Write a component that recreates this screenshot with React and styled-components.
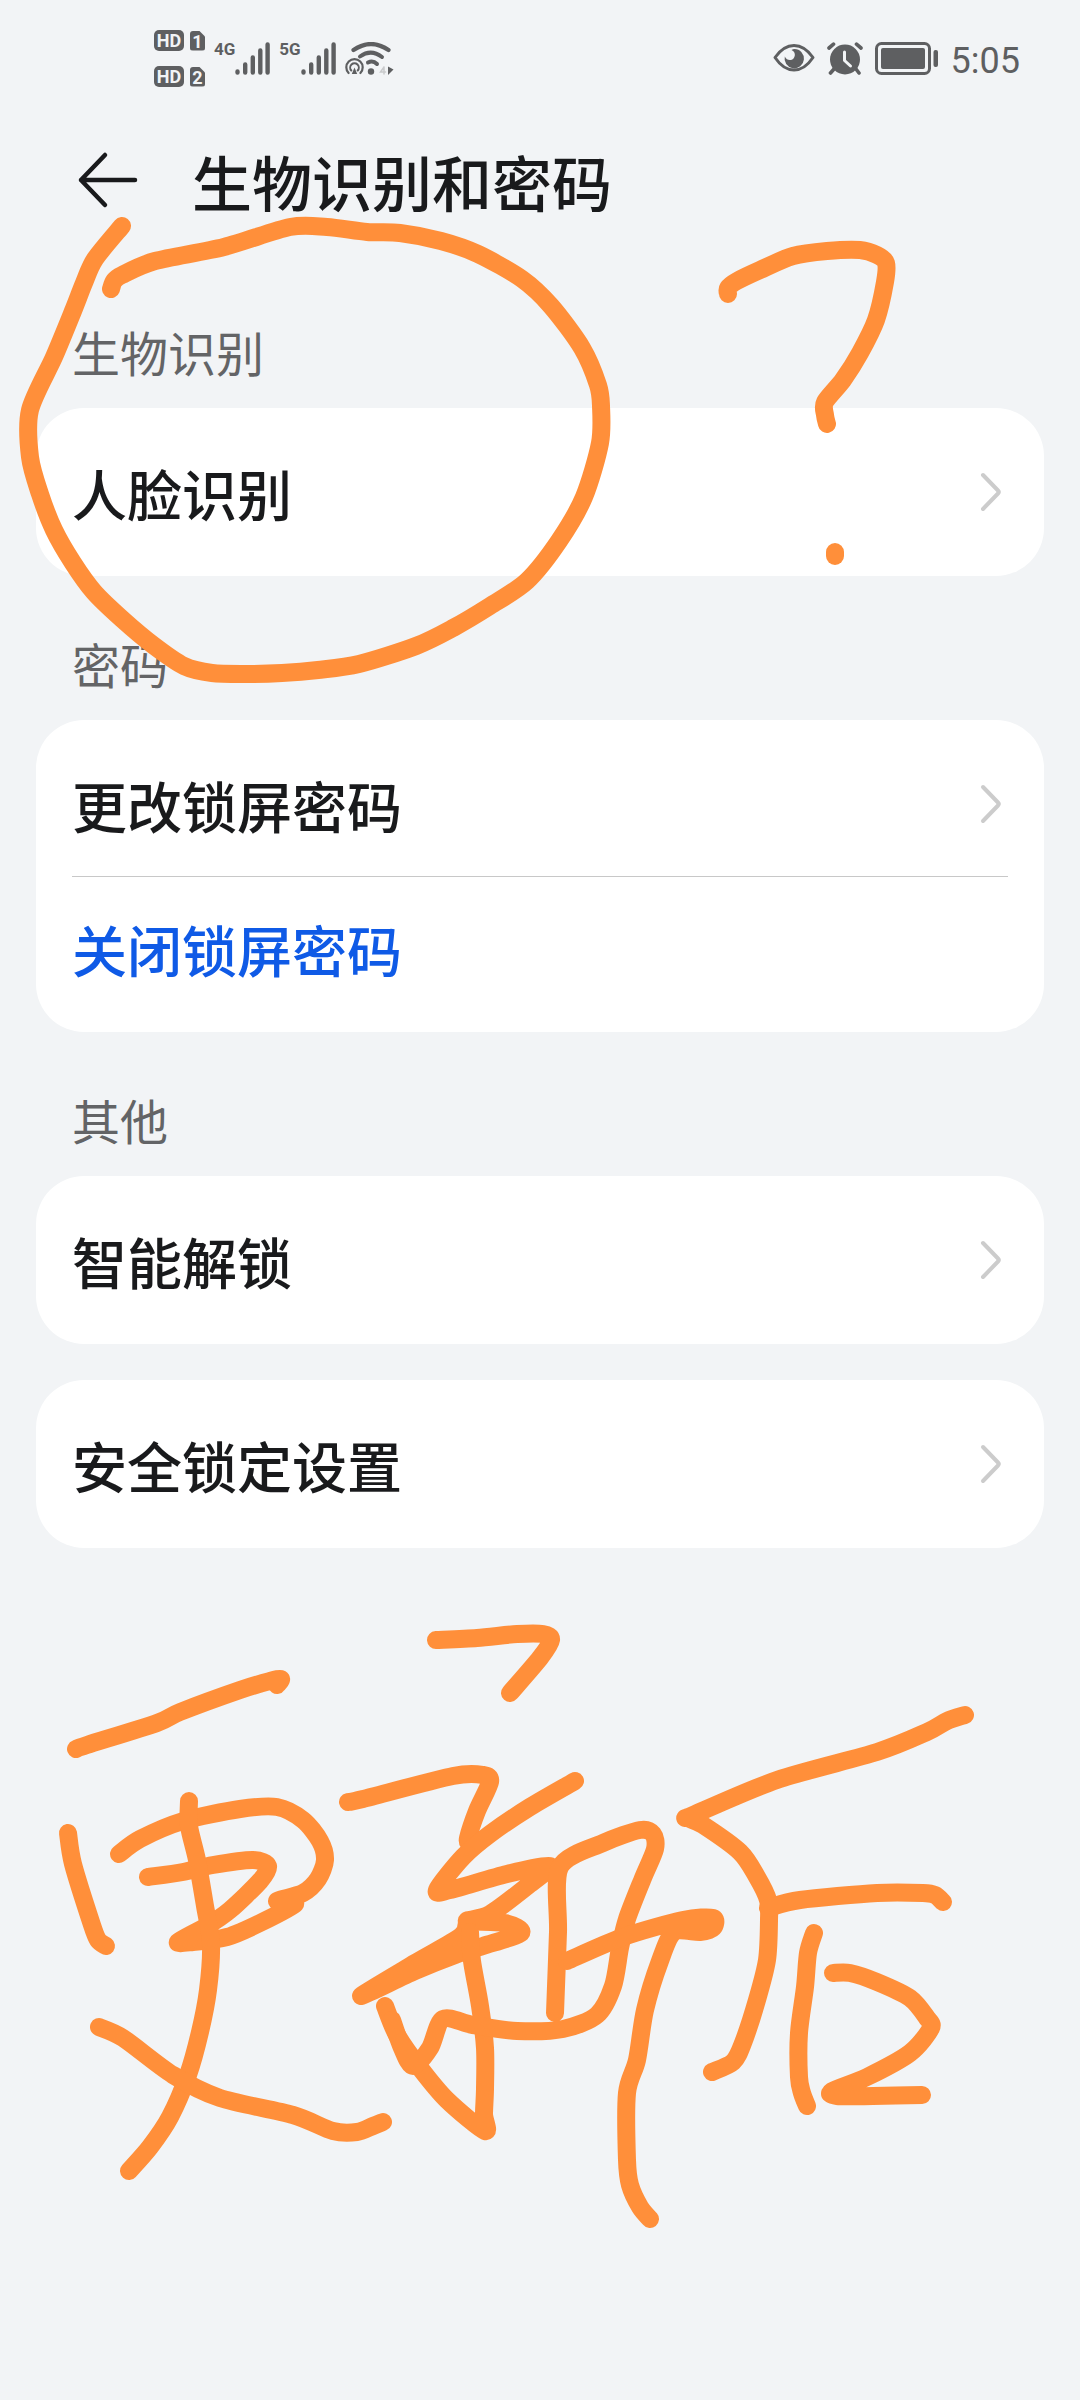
import React from 'react';
import styled, { createGlobalStyle, css } from 'styled-components';

const GlobalStyle = createGlobalStyle`
  body {
    margin: 0;
    background-color: #f2f4f6;
    font-family: Roboto, 'Noto Sans CJK SC', sans-serif;
    color: #191a1c;
  }
`;

// Whole screen
const Screen = styled.div`
  position: relative;
  min-height: 100vh;
  background-color: #f2f4f6;
`;

// Status bar at the very top
const StatusBar = styled.div`
  display: flex;
  align-items: center;
  justify-content: space-between;
  box-sizing: border-box;
  height: 96px;
  padding: 20px 60px 0 154px;
  color: #5e5f61;
`;

const StatusGroup = styled.div`
  display: flex;
  align-items: center;
  gap: ${({ $gap }) => $gap}px;
`;

const SimList = styled.div`
  display: flex;
  flex-direction: column;
  gap: 15px;
`;

const SimLine = styled.div`
  display: flex;
  align-items: flex-end;
  gap: 6px;
`;

const badge = css`
  background-color: #5e5f61;
  color: #f2f4f6;
  font-weight: 700;
  line-height: 21px;
  text-align: center;
`;

const HdBadge = styled.span`
  ${badge}
  width: 30px;
  height: 21px;
  border-radius: 5px;
  font-size: 18px;
`;

const SimBadge = styled.span`
  ${badge}
  width: 15px;
  height: 20px;
  border-radius: 3px;
  font-size: 18px;
  clip-path: polygon(0 0, 60% 0, 100% 30%, 100% 100%, 0 100%);
`;

const Signal = styled.div`
  display: flex;
  align-items: flex-start;
`;

const NetworkType = styled.span`
  font-size: 17px;
  font-weight: 700;
  line-height: 14px;
`;

const Clock = styled.span`
  padding-top: 6px;
  font-size: 36px;
  line-height: 40px;
`;

// Title bar with the back arrow
const Header = styled.header`
  display: flex;
  align-items: center;
  gap: 48px;
  height: 168px;
  padding: 0 72px;
`;

const BackButton = styled.button`
  display: flex;
  padding: 0;
  border: none;
  background: none;
  color: inherit;
  cursor: pointer;
`;

const Title = styled.h1`
  margin: 0;
  font-size: 60px;
  font-weight: 500;
`;

// Settings list
const Content = styled.main`
  padding: 0 36px;
`;

const SectionTitle = styled.h2`
  display: flex;
  align-items: flex-end;
  box-sizing: border-box;
  height: 144px;
  margin: 0;
  padding: 0 36px 22px;
  font-size: 48px;
  font-weight: 400;
  color: #636466;
`;

const Card = styled.div`
  padding: 12px 36px;
  border-radius: 48px;
  background-color: #ffffff;

  & + & {
    margin-top: 36px;
  }
`;

const Row = styled.button`
  display: flex;
  align-items: center;
  justify-content: space-between;
  width: 100%;
  height: 144px;
  padding: 0;
  border: none;
  background: none;
  font-family: inherit;
  font-size: 55px;
  font-weight: 500;
  text-align: left;
  color: ${({ $link }) => ($link ? '#0f5ae6' : '#191a1c')};
  cursor: pointer;

  & + & {
    box-shadow: inset 0 1px 0 #c8c8c8;
  }
`;

// Pen strokes lie over everything else
const Ink = styled.svg`
  position: absolute;
  top: 0;
  left: 0;
  width: 100%;
  height: auto;
  pointer-events: none;
  fill: none;
  stroke: #ff8f3a;
  stroke-width: 18px;
  stroke-linecap: round;
  stroke-linejoin: round;
`;

const SignalIcon = () => (
  <svg width="35" height="33" viewBox="0 0 35 33" stroke="currentColor" strokeWidth="4.4" strokeLinecap="round">
    <path d="M2.5 29.5v1M10.2 22.5v8M17.8 15.5v15M25.3 8.5v22M32.6 2.5v28" />
  </svg>
);

const WifiIcon = () => (
  <svg width="50" height="33" viewBox="0 0 50 33" fill="none" stroke="currentColor" strokeLinecap="round">
    <path d="M8.5 8Q26-4 43.500 8" strokeWidth="4.2" />
    <path d="M15 14.5Q26 6.500 37 15" strokeWidth="4" />
    <path d="M23 20.500Q28 18 32 22" strokeWidth="4" />
    <circle cx="26" cy="29.5" r="3.2" fill="currentColor" stroke="none" />
    <path d="M3.6 31A8.200 8.200 0 1 1 15.400 31" strokeWidth="2.2" />
    <path d="M6.3 28.500A4.300 4.300 0 1 1 12.700 28.500" strokeWidth="2" />
    <path d="M9.5 25.500L6.800 32h5.400z" fill="currentColor" stroke="none" />
    <path d="M39 25l-3.500 5h5M39 25v7" stroke="#c9cacc" strokeWidth="1.5" />
    <path d="M43 24.500v8.500l5.500-5.500z" fill="currentColor" stroke="none" />
  </svg>
);

const EyeIcon = () => (
  <svg width="42" height="30" viewBox="0 0 42 30">
    <path d="M2 14.5C8 6 14 2.500 21 2.500S34 6 40 14.500C34 23.500 28 27 21 27S8 23.500 2 14.500z" fill="none" stroke="currentColor" strokeWidth="3" strokeLinejoin="round" />
    <path d="M21.5 6A9.700 9.700 0 1 1 11.800 13.500C13.500 17.500 18 18 20.500 15.500C23 12.500 22 8.500 18.500 7C19.500 6.200 20.500 6 21.500 6z" fill="currentColor" />
  </svg>
);

const AlarmIcon = () => (
  <svg width="36" height="33" viewBox="0 0 36 33" strokeLinecap="round" strokeLinejoin="round">
    <path d="M2 6L6.500 2.200M29.500 2.200L34 6M7 27l-3.500 4M29 27l3 4" stroke="currentColor" strokeWidth="3.6" fill="none" />
    <circle cx="18" cy="17.5" r="15" fill="currentColor" />
    <path d="M17.5 10v8.500l6 5.500" stroke="#f2f4f6" strokeWidth="3" fill="none" />
  </svg>
);

const BatteryIcon = () => (
  <svg width="64" height="33" viewBox="0 0 64 33">
    <rect x="1.5" y="1.5" width="53" height="30" rx="5" fill="none" stroke="currentColor" strokeWidth="3" />
    <rect x="6" y="6" width="44" height="21" rx="2" fill="currentColor" />
    <rect x="58.5" y="8" width="4.5" height="17" rx="2" fill="currentColor" />
  </svg>
);

const BackIcon = () => (
  <svg width="72" height="60" viewBox="0 0 72 60" fill="none" stroke="currentColor" strokeWidth="4.5" strokeLinecap="round" strokeLinejoin="round">
    <path d="M63 30H9M33 5L9 30L33 55" />
  </svg>
);

const ChevronIcon = () => (
  <svg width="36" height="48" viewBox="0 0 36 48" fill="none" stroke="#cccccc" strokeWidth="4" strokeLinecap="round" strokeLinejoin="round">
    <path d="M11 7L26 22.500Q27.500 24 26 25.500L11 41" />
  </svg>
);

// Handwriting, one list of pen positions per stroke
const strokes = [
  // circle
  '122,226 95,259 84,283 73,311 54,357 30,410 30,457 40,494 54,530 73,563 94,592 122,619 153,645 184,666 212,673 245,674 282,673 318,670 359,664 416,646 453,628 490,606 527,581 559,541 584,497 600,443 601,406 598,385 582,348 551,306 522,279 478,254 441,241 400,233 367,232 327,227 290,227 224,247 155,261 122,275 114,281 111,289',
  // question mark
  '728,294 728,288 737,281 760,270 793,256 827,251 860,250 877,255 886,263 885,282 876,320 860,353 843,380 825,402 825,415 827,424',
  '835,552 835,556',
  // first character
  '76,1749 87,1745 157,1723 180,1712 240,1690 270,1681 281,1679 277,1685',
  '68,1833 73,1864 92,1925 98,1940 106,1946',
  '119,1854 140,1839 183,1821 240,1809 277,1807 303,1820 320,1841 325,1860 318,1879 303,1893 277,1901 295,1904 260,1923 227,1937 193,1942 178,1942 207,1926 230,1910 260,1881 268,1866 253,1860 213,1865 183,1872 148,1877',
  '189,1801 189,1826 197,1860 205,1906 211,1944 208,1990 200,2032 188,2075 170,2117 150,2147 129,2171',
  '99,2027 123,2038 173,2075 220,2098 293,2115 333,2131 357,2132 373,2126 383,2122',
  // second character
  '436,1640 477,1638 517,1634 543,1634 551,1640 540,1658 510,1693',
  '348,1802 363,1799 453,1776 483,1775 490,1782 477,1811 468,1838 469,1844',
  '575,1781 530,1807 490,1834 463,1857 437,1890 450,1890 507,1874 550,1866 530,1884 490,1914 467,1921 505,1923 521,1933 483,1946 455,1955 415,1971 361,1996 415,1963 461,1936 467,1921',
  '470,1932 472,1961 480,2006 485,2048 485,2089 484,2114 485,2131 447,2100 420,2068 397,2035 385,2006',
  '392,2020 402,2048 413,2066 430,2048 443,2019 473,2025 517,2031 563,2029 597,2015 613,1986 620,1948 627,1919 643,1878 655,1849 653,1834 640,1830 603,1843 560,1867 558,1932 555,2013',
  '567,1961 623,1937 683,1920 713,1918 713,1928 700,1932 674,1932 660,1961 645,2010 637,2060 627,2093 627,2160 630,2185 640,2207 650,2219',
  // third character
  '965,1715 947,1721 927,1732 877,1752 777,1780 693,1815 688,1818 703,1825 740,1852 757,1877 768,1900 769,1920 767,1960 757,2000 743,2043 733,2062 712,2072',
  '768,1908 800,1900 877,1893 923,1893 935,1895 943,1902',
  '814,1933 808,1953 805,1987 799,2033 799,2077 802,2093 807,2106',
  '833,1973 850,1973 877,1982 910,1998 927,2018 931,2028 910,2053 867,2077 832,2091 837,2096 873,2096 922,2095',
];

// Runs a smooth curve through the pen positions
const toPath = (stroke) => {
  const points = stroke.split(' ').map((pair) => pair.split(',').map(Number));
  let d = `M${points[0]}`;
  for (let i = 0; i < points.length - 1; i++) {
    const before = points[i - 1] || points[i];
    const [from, to] = [points[i], points[i + 1]];
    const after = points[i + 2] || to;
    const c1 = from.map((v, k) => v + (to[k] - before[k]) / 7);
    const c2 = to.map((v, k) => v - (after[k] - from[k]) / 7);
    d += `C${c1} ${c2} ${to}`;
  }
  return d;
};

const App = () => {
  return (
    <Screen>
      <GlobalStyle />

      {/* Status bar */}
      <StatusBar>
        <StatusGroup $gap={9}>
          <SimList>
            <SimLine>
              <HdBadge>HD</HdBadge>
              <SimBadge>1</SimBadge>
            </SimLine>
            <SimLine>
              <HdBadge>HD</HdBadge>
              <SimBadge>2</SimBadge>
            </SimLine>
          </SimList>
          <Signal>
            <NetworkType>4G</NetworkType>
            <SignalIcon />
          </Signal>
          <Signal>
            <NetworkType>5G</NetworkType>
            <SignalIcon />
          </Signal>
          <WifiIcon />
        </StatusGroup>
        <StatusGroup $gap={12}>
          <EyeIcon />
          <AlarmIcon />
          <BatteryIcon />
          <Clock>5:05</Clock>
        </StatusGroup>
      </StatusBar>

      {/* Title */}
      <Header>
        <BackButton aria-label="返回">
          <BackIcon />
        </BackButton>
        <Title>生物识别和密码</Title>
      </Header>

      {/* Settings */}
      <Content>
        <SectionTitle>生物识别</SectionTitle>
        <Card>
          <Row>
            人脸识别
            <ChevronIcon />
          </Row>
        </Card>

        <SectionTitle>密码</SectionTitle>
        <Card>
          <Row>
            更改锁屏密码
            <ChevronIcon />
          </Row>
          <Row $link>关闭锁屏密码</Row>
        </Card>

        <SectionTitle>其他</SectionTitle>
        <Card>
          <Row>
            智能解锁
            <ChevronIcon />
          </Row>
        </Card>
        <Card>
          <Row>
            安全锁定设置
            <ChevronIcon />
          </Row>
        </Card>
      </Content>

      {/* Handwritten notes */}
      <Ink viewBox="0 0 1080 2400" aria-hidden="true">
        {strokes.map((stroke) => (
          <path key={stroke} d={toPath(stroke)} />
        ))}
      </Ink>
    </Screen>
  );
};

export default App;
